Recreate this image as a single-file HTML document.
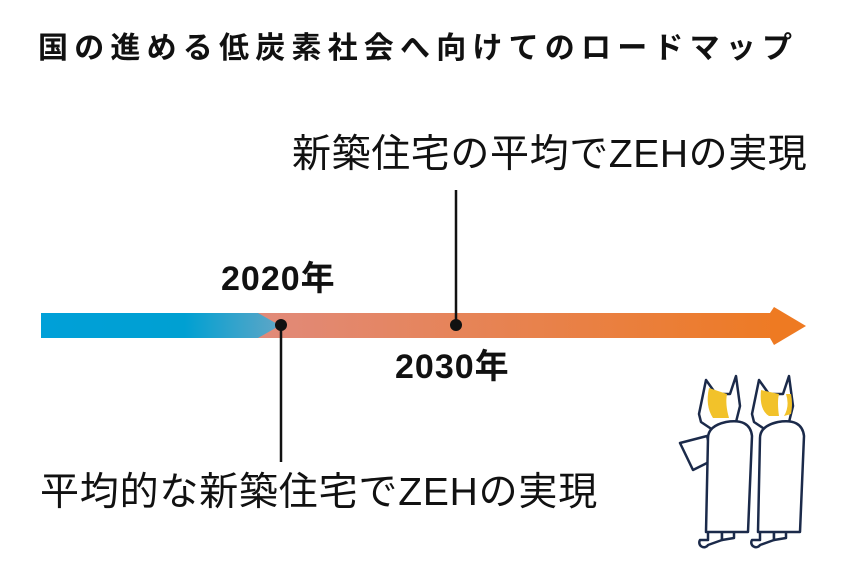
<!DOCTYPE html>
<html><head><meta charset="utf-8"><style>
body{margin:0;width:845px;height:582px;background:#fff;position:relative;overflow:hidden;font-family:"Liberation Sans","Noto Sans CJK JP",sans-serif;color:#111}
.t{position:absolute;white-space:nowrap;line-height:1}
</style></head><body>
<div class="t" style="left:38px;top:34px;font-size:30px;font-weight:bold;letter-spacing:6.2px">国の進める低炭素社会へ向けてのロードマップ</div>
<div class="t" style="left:292px;top:135px;font-size:39px;letter-spacing:0.6px">新築住宅の平均でZEHの実現</div>
<div class="t" style="left:221px;top:262px;font-size:34px;font-weight:bold;letter-spacing:1px">2020年</div>
<div class="t" style="left:395px;top:350px;font-size:34px;font-weight:bold;letter-spacing:1px">2030年</div>
<div class="t" style="left:40px;top:473px;font-size:39px;letter-spacing:0.8px">平均的な新築住宅でZEHの実現</div>
<svg width="845" height="582" style="position:absolute;left:0;top:0">
<defs>
<linearGradient id="o" x1="258" x2="790" gradientUnits="userSpaceOnUse">
<stop offset="0" stop-color="#e18a7a"/><stop offset="1" stop-color="#ee7a22"/></linearGradient>
<linearGradient id="b" x1="41" x2="280" gradientUnits="userSpaceOnUse">
<stop offset="0" stop-color="#00a0d8"/><stop offset="0.6" stop-color="#00a0d2"/><stop offset="1" stop-color="#5fa6c6"/></linearGradient>
</defs>
<rect x="250" y="313" width="530" height="25" fill="url(#o)"/>
<polygon points="770,313 774,307 806,326 774,345 770,338" fill="#ee7a22"/>
<polygon points="41,313 258,313 280,325.5 258,338 41,338" fill="url(#b)"/>
<line x1="456" y1="190" x2="456" y2="325" stroke="#111" stroke-width="2.5"/>
<circle cx="456" cy="325" r="6" fill="#111"/>
<line x1="281" y1="325" x2="281" y2="462" stroke="#111" stroke-width="2.5"/>
<circle cx="281" cy="325" r="6" fill="#111"/>
<g stroke="#1b2a4a" stroke-width="2.5" fill="#fff" stroke-linejoin="round" stroke-linecap="round">
<path d="M708,540 l0,-20 l14,0 l0,20 l-14,5 a4,4 0 0 1 -8,-5z"/>
<path d="M722,536 l0,-16 l12,0 l0,18 l-12,2 z"/>
<polygon points="680,443 707,436 713,460 693,470" />
<path d="M706,380 l10,14 l14,0 l6,-18 l4,30 l-5,20 l-22,4 l-12,-8 l-2,-8 z"/>
<path d="M709,388 q-4,18 4,30 l16,0 q-4,-14 -2,-24 z" fill="#f2c22a" stroke="none"/>
<path d="M708,438 q0,-12 18,-16 q24,-4 26,14 l-4,96 l-42,0 z"/>
<path d="M760,540 l0,-20 l14,0 l0,20 l-14,5 a4,4 0 0 1 -8,-5z"/>
<path d="M774,536 l0,-16 l12,0 l0,18 l-12,2 z"/>
<path d="M759,380 l10,14 l14,0 l6,-18 l4,30 l-5,20 l-22,4 l-12,-8 l-2,-8 z"/>
<path d="M761,390 q-2,20 8,26 l10,0 q-2,-14 0,-22 z M786,394 q4,12 -2,22 l7,-2 q2,-10 0,-20 z" fill="#f2c22a" stroke="none"/>
<path d="M760,438 q0,-12 18,-16 q24,-4 26,14 l-4,96 l-42,0 z"/>
</g>
</svg>
</body></html>
